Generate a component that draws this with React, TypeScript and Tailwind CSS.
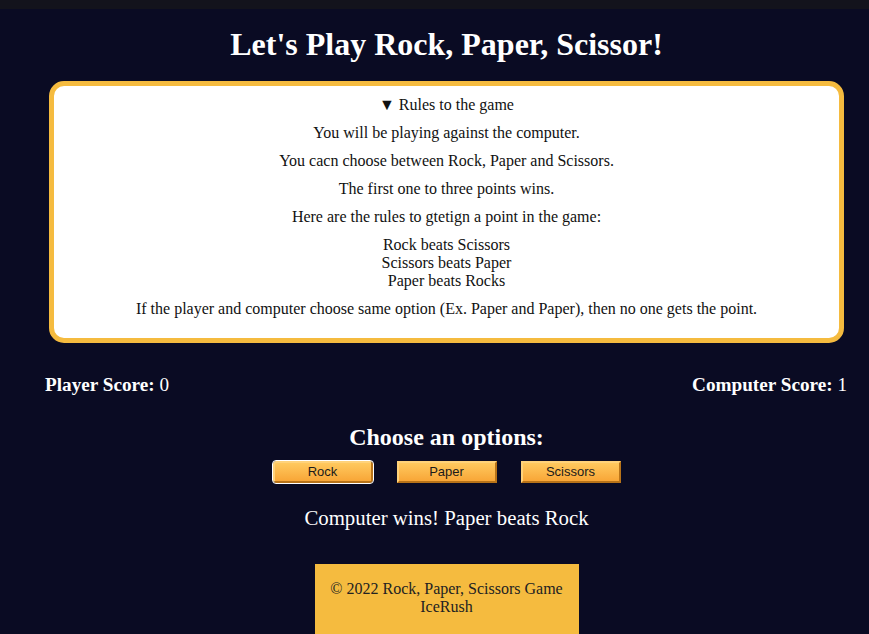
import React from "react";

const serif = { fontFamily: '"Liberation Serif", "Times New Roman", serif' };

function Btn({ label, focused }: { label: string; focused?: boolean }) {
  return (
    <button
      className={
        "w-[100px] h-[22px] text-[13px] text-[#1a1a1a] border-2 border-t-[#ffd27a] border-l-[#ffd27a] border-r-[#b87318] border-b-[#b87318] bg-gradient-to-b from-[#ffc95e] to-[#f8a636] flex items-center justify-center " +
        (focused ? "rounded-[3px] outline outline-[1.5px] outline-white" : "")
      }
      style={{ fontFamily: '"Liberation Sans", Arial, sans-serif' }}
    >
      {label}
    </button>
  );
}

export default function App() {
  return (
    <div className="h-[634px] overflow-hidden bg-[#0a0b23] text-white flex flex-col" style={serif}>
      <div className="h-[9px] shrink-0 bg-[#13131c]" />
      <div className="flex flex-col pl-[24px]">
        <h1 className="text-[32px] font-bold text-center leading-[37px] mt-[17px]">
          Let's Play Rock, Paper, Scissor!
        </h1>
        <div className="shrink-0 mx-[25px] mt-[18px] h-[262px] border-[5px] border-[#f5bb3f] rounded-[15px] bg-white text-[#111] text-[16px] leading-[18px] text-center pt-[10px]">
          <div>▼ Rules to the game</div>
          <p className="mt-[10px]">You will be playing against the computer.</p>
          <p className="mt-[10px]">You cacn choose between Rock, Paper and Scissors.</p>
          <p className="mt-[10px]">The first one to three points wins.</p>
          <p className="mt-[10px]">Here are the rules to gtetign a point in the game:</p>
          <p className="mt-[10px]">
            Rock beats Scissors
            <br />
            Scissors beats Paper
            <br />
            Paper beats Rocks
          </p>
          <p className="mt-[10px]">
            If the player and computer choose same option (Ex. Paper and Paper), then no one gets the point.
          </p>
        </div>
        <div className="flex justify-between pl-[21px] pr-[22px] mt-[31px] text-[19.2px] leading-[22px]">
          <div>
            <span className="font-bold">Player Score:</span> 0
          </div>
          <div>
            <span className="font-bold">Computer Score:</span> 1
          </div>
        </div>
        <h2 className="text-[24px] font-bold text-center leading-[28px] mt-[27px]">Choose an options:</h2>
        <div className="flex justify-center gap-[24px] mt-[10px]">
          <Btn label="Rock" focused />
          <Btn label="Paper" />
          <Btn label="Scissors" />
        </div>
        <div className="text-center text-[20.8px] leading-[24px] mt-[23px]">Computer wins! Paper beats Rock</div>
        <div className="flex justify-center mt-[34px]">
          <div className="shrink-0 w-[264px] h-[80px] bg-[#f5bb3f] text-[#222] text-[16px] leading-[18px] text-center pt-[16px]">
            © 2022 Rock, Paper, Scissors Game
            <br />
            IceRush
          </div>
        </div>
      </div>
    </div>
  );
}
